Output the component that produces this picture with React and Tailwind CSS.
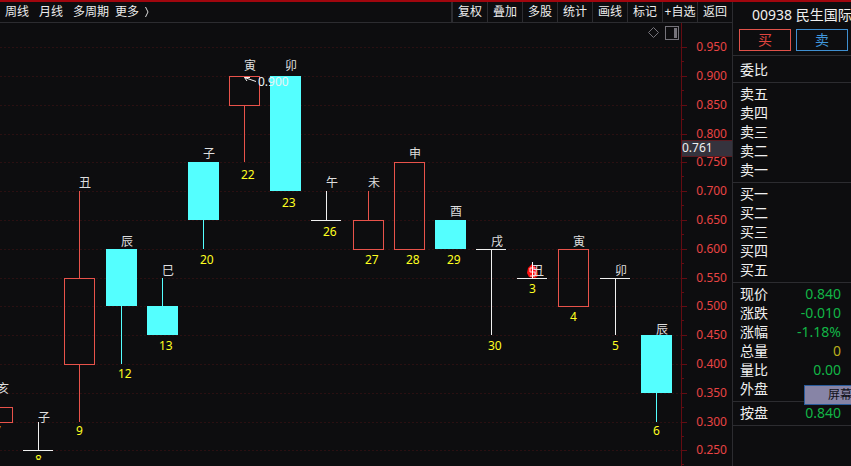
const PERIODS = ["周线", "月线", "多周期"];
const TOOLS = ["复权", "叠加", "多股", "统计", "画线", "标记", "+自选", "返回"];

const PRICES = Array.from({ length: 15 }, (_, i) => (0.95 - i * 0.05).toFixed(3));

const FIRST_PRICE_Y = 24.2;
const STEP = 28.8;
const yOf = (price) => Math.round(FIRST_PRICE_Y + ((0.95 - price) / 0.05) * STEP);

const COLORS = { up: "#e8524a", down: "#54ffff", flat: "#f0f0f0" };

// x: centre line, top/bottom: body, branch: label above, day: label below
const CANDLES = [
  { x: -3, kind: "up", top: 0.325, bottom: 0.3, high: 0.325, low: 0.3, branch: "亥", branchY: 370, day: "7", dayY: 412 },
  { x: 38, kind: "flat", top: 0.25, bottom: 0.25, high: 0.3, low: 0.25, branch: "子", branchY: 399, day: "8", dayY: 441 },
  { x: 79, kind: "up", top: 0.55, bottom: 0.4, high: 0.7, low: 0.3, branch: "丑", branchY: 164, day: "9", dayY: 412 },
  { x: 121, kind: "down", top: 0.6, bottom: 0.5, high: 0.6, low: 0.4, branch: "辰", branchY: 223, day: "12", dayY: 355 },
  { x: 162, kind: "down", top: 0.5, bottom: 0.45, high: 0.55, low: 0.45, branch: "巳", branchY: 252, day: "13", dayY: 327 },
  { x: 203, kind: "down", top: 0.75, bottom: 0.65, high: 0.75, low: 0.6, branch: "子", branchY: 135, day: "20", dayY: 241 },
  { x: 244, kind: "up", top: 0.9, bottom: 0.85, high: 0.9, low: 0.75, branch: "寅", branchY: 47, day: "22", dayY: 156 },
  { x: 285, kind: "down", top: 0.9, bottom: 0.7, high: 0.9, low: 0.7, branch: "卯", branchY: 47, day: "23", dayY: 184 },
  { x: 326, kind: "flat", top: 0.65, bottom: 0.65, high: 0.7, low: 0.65, branch: "午", branchY: 164, day: "26", dayY: 213 },
  { x: 368, kind: "up", top: 0.65, bottom: 0.6, high: 0.7, low: 0.6, branch: "未", branchY: 164, day: "27", dayY: 241 },
  { x: 409, kind: "up", top: 0.75, bottom: 0.6, high: 0.75, low: 0.6, branch: "申", branchY: 135, day: "28", dayY: 241 },
  { x: 450, kind: "down", top: 0.65, bottom: 0.6, high: 0.65, low: 0.6, branch: "酉", branchY: 193, day: "29", dayY: 241 },
  { x: 491, kind: "flat", top: 0.6, bottom: 0.6, high: 0.6, low: 0.45, branch: "戌", branchY: 223, day: "30", dayY: 327 },
  { x: 532, kind: "flat", top: 0.55, bottom: 0.55, high: 0.55, low: 0.55, branch: "丑", branchY: 252, day: "3", dayY: 270, marker: true },
  { x: 573, kind: "up", top: 0.6, bottom: 0.5, high: 0.6, low: 0.5, branch: "寅", branchY: 223, day: "4", dayY: 298 },
  { x: 615, kind: "flat", top: 0.55, bottom: 0.55, high: 0.55, low: 0.45, branch: "卯", branchY: 252, day: "5", dayY: 327 },
  { x: 656, kind: "down", top: 0.45, bottom: 0.35, high: 0.45, low: 0.3, branch: "辰", branchY: 311, day: "6", dayY: 412 },
];

const ASKS = ["卖五", "卖四", "卖三", "卖二", "卖一"];
const BIDS = ["买一", "买二", "买三", "买四", "买五"];
const STATS = [
  ["现价", "0.840", "text-[#12b546]"],
  ["涨跌", "-0.010", "text-[#12b546]"],
  ["涨幅", "-1.18%", "text-[#12b546]"],
  ["总量", "0", "text-[#b9ae1c]"],
  ["量比", "0.00", "text-[#12b546]"],
  ["外盘", "", ""],
];

function Candle({ c }) {
  const color = COLORS[c.kind];
  const top = yOf(c.top);
  const bottom = yOf(c.bottom);
  const high = yOf(c.high);
  const low = yOf(c.low);
  return (
    <g shapeRendering="crispEdges">
      {high < top && <rect x={c.x} y={high} width="1" height={top - high} fill={color} />}
      {low > bottom && <rect x={c.x} y={bottom} width="1" height={low - bottom} fill={color} />}
      {c.kind === "up" && (
        <rect x={c.x - 14.5} y={top + 0.5} width="30" height={bottom - top} fill="none" stroke={color} />
      )}
      {c.kind === "down" && <rect x={c.x - 15} y={top} width="31" height={bottom - top} fill={color} />}
      {c.kind === "flat" && <rect x={c.x - 15} y={top} width="30" height="1" fill={color} />}
      {c.marker && (
        <g shapeRendering="auto">
          <path d="M532 241 L537 245 L538 253 L535 255 L529 254 L527 250 L528 245 Z" fill="#ff1010" />
          <path d="M535 245 H530 V249 H535 V253 H530" fill="none" stroke="#ffd8d8" />
          <path d="M532.5 239 V255" stroke="#ffffff" />
        </g>
      )}
      <text x={c.x} y={c.branchY} fill="#dedede">{c.branch}</text>
      <text x={c.x - 3} y={c.dayY} fill="#ffff20">{c.day}</text>
    </g>
  );
}

function Chart() {
  return (
    <div className="relative flex flex-1">
      <svg className="h-[443px] min-w-0 flex-1 text-xs" role="img" aria-label="K线图">
        <defs>
          <clipPath id="plot">
            <rect x="0" y="0" width="100%" height="437" />
          </clipPath>
        </defs>
        {PRICES.map((p) => (
          <line key={p} x1="0" x2="100%" y1={yOf(p) + 0.5} y2={yOf(p) + 0.5} stroke="#2a1012" strokeDasharray="2 2" />
        ))}
        <g clipPath="url(#plot)">
          {CANDLES.map((c) => (
            <Candle key={c.x} c={c} />
          ))}
        </g>
        <path d="M256 58.5 L244.500 54.500 M244.500 54.500 H250 M244.500 54.500 L247 58" fill="none" stroke="#f4f4f4" />
        <text x="258" y="63" fill="#e8f4f4">0.900</text>
      </svg>
      <svg className="h-[443px] w-[51px] shrink-0 text-xs" aria-label="价格轴">
        <rect x="0" y="0" width="1" height="443" fill="#640c12" />
        {PRICES.map((p) => (
          <g key={p} shapeRendering="crispEdges">
            <rect x="1" y={yOf(p)} width="5" height="1" fill="#640c12" />
            <rect x="1" y={yOf(p) + 14} width="2" height="1" fill="#640c12" />
            <text x="46" y={yOf(p) + 4} textAnchor="end" fill="#e84444">{p}</text>
          </g>
        ))}
        <rect x="1" y="117" width="50" height="16" fill="#35333d" />
        <path d="M1 117.500 H51 M1 133.500 H51" stroke="#5a1a20" />
        <text x="1" y="129" fill="#f0f0f0">0.761</text>
      </svg>
      <div className="absolute top-[3px] right-[53px] flex items-center gap-[5px]">
        <button type="button" aria-label="标记点" className="block">
          <svg className="block h-[14px] w-[13px]" viewBox="0 0 13 14">
            <path d="M6.500 1.500 L11.500 6.500 L6.500 11.500 L1.500 6.500 Z" fill="none" stroke="#75737a" />
          </svg>
        </button>
        <button type="button" aria-label="侧栏" className="block">
          <svg className="block size-[14px]" viewBox="0 0 14 14" shapeRendering="crispEdges">
            <rect x="0.5" y="0.5" width="13" height="13" fill="none" stroke="#75737a" />
            <rect x="9" y="2" width="3" height="10" fill="#75737a" />
          </svg>
        </button>
      </div>
    </div>
  );
}

function Row({ label, value, tone }) {
  return (
    <div className="flex h-[19px] items-center justify-between pr-2.5 pb-0.5 pl-[7px]">
      <dt>{label}</dt>
      <dd className={tone}>{value}</dd>
    </div>
  );
}

function QuotePanel() {
  return (
    <aside className="relative w-[119px] shrink-0 overflow-hidden border-l border-[#2c2c30] text-sm leading-[19px] text-[#f0f0f0]">
      <h1 className="flex h-[27px] items-center pb-0.5 pl-[19px] whitespace-nowrap">00938 民生国际</h1>
      <div className="flex gap-[5px] border-b border-[#2c2c30] pb-1 pl-1.5">
        <button type="button" className="h-[22px] w-[52px] border border-[#e0524a] leading-5 text-[#e0453f]">买</button>
        <button type="button" className="h-[22px] w-[52px] border border-[#3f8fd0] leading-5 text-[#3f96dc]">卖</button>
      </div>
      <dl>
        <div className="border-b border-[#2c2c30] pt-[5px] pb-0.5">
          <Row label="委比" />
        </div>
        <div className="border-b border-[#2c2c30] py-0.5">
          {ASKS.map((l) => <Row key={l} label={l} />)}
        </div>
        <div className="border-b border-[#2c2c30] py-0.5">
          {BIDS.map((l) => <Row key={l} label={l} />)}
        </div>
        <div className="border-b border-[#2c2c30] py-0.5">
          {STATS.map(([l, v, t]) => <Row key={l} label={l} value={v} tone={t} />)}
        </div>
        <div className="border-b border-[#2c2c30] py-0.5">
          <Row label="按盘" value="0.840" tone="text-[#12b546]" />
        </div>
      </dl>
      <div className="absolute top-[383px] left-[71px] h-5 w-[72px] border border-[#2a5c9c] bg-[#8784a6] pl-[23px] text-xs leading-[18px] whitespace-nowrap text-[#101018]">
        屏幕
      </div>
    </aside>
  );
}

export default function App() {
  return (
    <div className="flex min-h-screen overflow-hidden border-t-2 border-[#a0060e] bg-[#0d0d0f] font-['Noto_Sans','Noto_Sans_CJK_SC',sans-serif]">
      <main className="flex min-w-0 flex-1 flex-col">
        <header className="flex h-[21px] justify-between border-b border-[#2c2c30] text-xs whitespace-nowrap text-[#ececec]">
          <nav className="flex items-center gap-2.5 pl-[5px]">
            {PERIODS.map((p) => (
              <button key={p} type="button">{p}</button>
            ))}
            <button type="button" className="-ml-1 flex items-center gap-1">
              更多
              <svg className="h-3 w-2" viewBox="0 0 8 12">
                <path d="M2.500 1 L5 6 L2.500 11" fill="none" stroke="#dcdcdc" />
              </svg>
            </button>
          </nav>
          <div className="flex border-l border-[#2c2c30]">
            {TOOLS.map((t) => (
              <button key={t} type="button" className="flex w-[35px] items-center justify-center border-l border-[#2c2c30]">
                {t}
              </button>
            ))}
          </div>
        </header>
        <Chart />
      </main>
      <QuotePanel />
    </div>
  );
}
